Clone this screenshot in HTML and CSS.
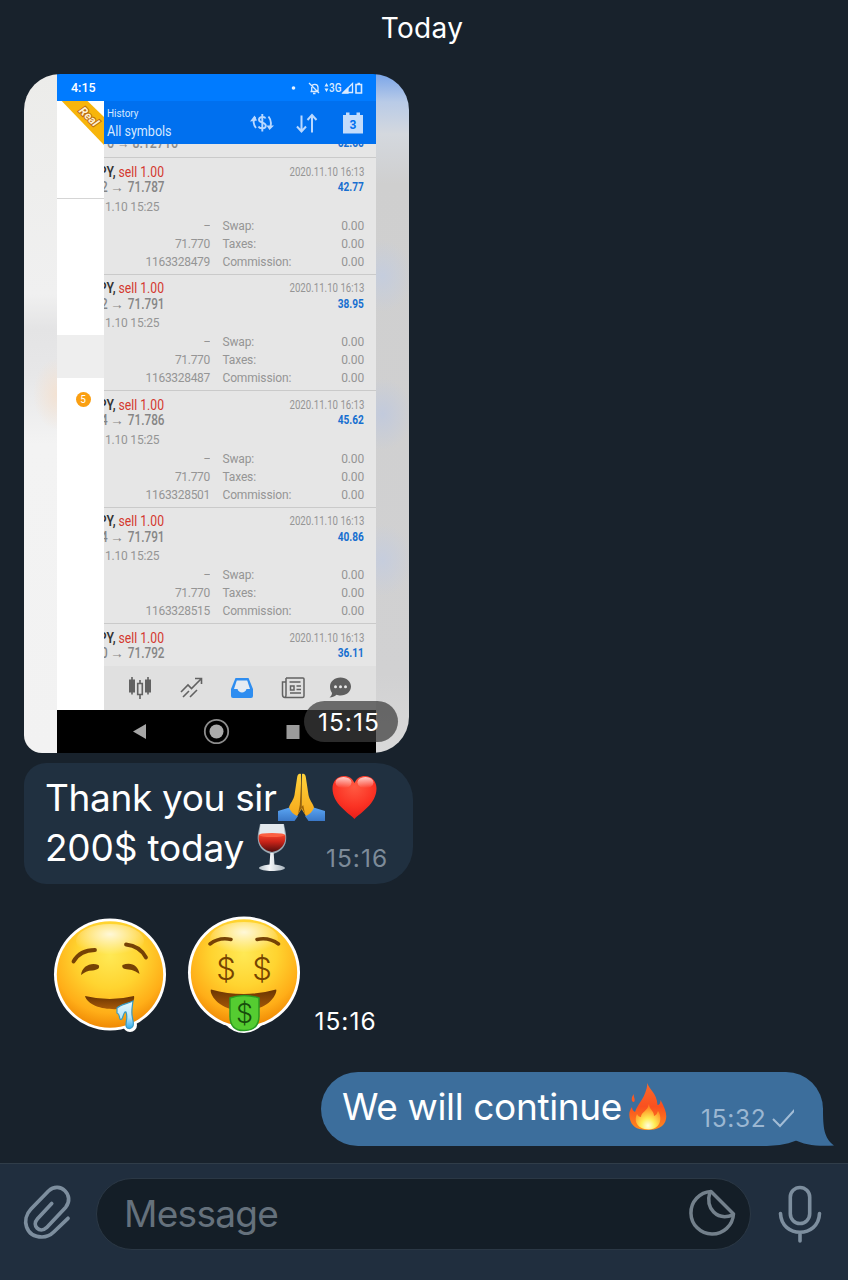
FILE: index.html
```html
<!DOCTYPE html>
<html lang="en">
<head>
<meta charset="utf-8">
<title>Chat</title>
<link rel="stylesheet" href="styles.css">
</head>
<body>
<main class="chat">
  <div class="day"><span>Today</span></div>

  <section class="photo">
    <div class="side side-left"></div>
    <div class="phone">
      <div class="status">
        <span class="clock">4:15</span>
        <svg class="status-icons" width="74" height="16" viewBox="0 0 74 16" fill="none" stroke="#d9eaff" stroke-width="1.3">
          <circle cx="3.5" cy="8" r="1.8" fill="#e8f3ff" stroke="none"/>
          <path d="M20.500 11.500h7.500V7.500c0-4-6-4-6.300-.5v4.300M19 3l10 10M23 13.500h2.500"/>
          <path d="M34.500 6.500l2-3.500 2 3.500zM34.500 8.500l2 3.500 2-3.500z" fill="#d9eaff" stroke="none"/>
          <text x="39" y="12" class="net" textLength="12.500" lengthAdjust="spacingAndGlyphs">3G</text>
          <path d="M53.500 12.500L62.500 3.500v9z"/><path d="M53 13l5-5v5z" fill="#d9eaff"/>
          <path d="M66 4.500h5.500v8.500H66zM67.500 3.500h2.500" stroke-width="1.600"/>
        </svg>
      </div>
      <div class="app">
        <aside class="drawer">
          <div class="drawer-head">
            <svg width="47" height="45" viewBox="0 0 47 45">
              <path d="M4.700 0H30.500L47 16V44z" fill="#f7b50c"/>
              <text class="real" x="32" y="15.500" text-anchor="middle" dominant-baseline="central" transform="rotate(45 32 15.500)">Real</text>
            </svg>
          </div>
          <div class="drawer-gap"></div>
          <div class="drawer-active"></div>
          <div class="drawer-badge">5</div>
        </aside>
        <div class="screen">
          <header class="toolbar">
            <div class="titles"><span class="t-small">History</span><span class="t-big">All symbols</span></div>
            <svg width="116" height="26" viewBox="0 0 116 26" fill="none" stroke="#b9d8ff" stroke-width="2">
              <path d="M17.500 8.500c-1-2.500-6.500-2-6.500 1.200 0 3.500 6.800 2.500 6.800 6 0 3.300-6 3.500-7.300.8M14.300 4v17.500" stroke-width="1.900"/>
              <path d="M7.500 7c-3 3-2 8 .5 11M20.500 6.500c2 2.500 3 6 2 9.500" stroke-width="1.900"/>
              <path d="M2 11.500l4.500-6 2.500 5zM18.500 15.500h7.500l-4.500 4.500z" fill="#b9d8ff" stroke="none"/>
              <path d="M53.500 5.500v16M49 16.500l4.500 5 4.500-5M64 22.500V5M59.500 10l4.500-5 4.500 5"/>
              <path d="M95 5h20v18.500H95zM98 2.500h3.500v4H98zM108.500 2.500h3.500v4h-3.500z" fill="#c3dcfb" stroke="none"/>
              <text x="105" y="19" text-anchor="middle" class="cal">3</text>
            </svg>
          </header>
          <div class="list">
            <div class="partial"><span class="pl">6 → 8.12716</span><span class="pr">62.66</span></div>
            <article class="deal">
              <div class="line"><span class="sym"><b>JPY,</b> sell 1.00</span><span class="date">2020.11.10 16:13</span></div>
              <div class="line"><span class="price">2 <i>→</i> 71.787</span><span class="profit">42.77</span></div>
              <div class="open">1.10 15:25</div>
              <div class="info"><span>—</span><span>Swap:</span><span>0.00</span><span>71.770</span><span>Taxes:</span><span>0.00</span><span>1163328479</span><span>Commission:</span><span>0.00</span></div>
            </article>
            <article class="deal">
              <div class="line"><span class="sym"><b>JPY,</b> sell 1.00</span><span class="date">2020.11.10 16:13</span></div>
              <div class="line"><span class="price">2 <i>→</i> 71.791</span><span class="profit">38.95</span></div>
              <div class="open">1.10 15:25</div>
              <div class="info"><span>—</span><span>Swap:</span><span>0.00</span><span>71.770</span><span>Taxes:</span><span>0.00</span><span>1163328487</span><span>Commission:</span><span>0.00</span></div>
            </article>
            <article class="deal">
              <div class="line"><span class="sym"><b>JPY,</b> sell 1.00</span><span class="date">2020.11.10 16:13</span></div>
              <div class="line"><span class="price">4 <i>→</i> 71.786</span><span class="profit">45.62</span></div>
              <div class="open">1.10 15:25</div>
              <div class="info"><span>—</span><span>Swap:</span><span>0.00</span><span>71.770</span><span>Taxes:</span><span>0.00</span><span>1163328501</span><span>Commission:</span><span>0.00</span></div>
            </article>
            <article class="deal">
              <div class="line"><span class="sym"><b>JPY,</b> sell 1.00</span><span class="date">2020.11.10 16:13</span></div>
              <div class="line"><span class="price">4 <i>→</i> 71.791</span><span class="profit">40.86</span></div>
              <div class="open">1.10 15:25</div>
              <div class="info"><span>—</span><span>Swap:</span><span>0.00</span><span>71.770</span><span>Taxes:</span><span>0.00</span><span>1163328515</span><span>Commission:</span><span>0.00</span></div>
            </article>
            <article class="deal">
              <div class="line"><span class="sym"><b>JPY,</b> sell 1.00</span><span class="date">2020.11.10 16:13</span></div>
              <div class="line"><span class="price">0 <i>→</i> 71.792</span><span class="profit">36.11</span></div>
            </article>
          </div>
          <nav class="tabs">
            <svg width="272" height="44" viewBox="0 0 272 44" fill="none" stroke="#626262" stroke-width="2">
              <path d="M25 13.500h6v13h-6zM41 13.500h6v13h-6z" fill="#626262" stroke="none"/><path d="M28 11v17.500M44 11v17.500M36 14v4M36 28v5M33.700 17.500h4.600v11h-4.600z" stroke-width="1.600"/>
              <path d="M77 26l7-7 3.500 3.500L97 13M91 12.500h6.500V18M79 31l6-6M86 31l7-7" stroke-width="1.600"/>
              <path d="M131.500 12h13l4.500 11v7q0 2-2 2h-18q-2 0-2-2v-7z" fill="#2e8df0" stroke="none"/><path d="M132.800 14.500h10.400L146 23h-3.500c-1 4.500-8 4.500-9 0H130z" fill="#e5ebf2" stroke="none"/>
              <path d="M182 12h17q1 0 1 1v17q0 1.500-1.500 1.500H181q-2.500 0-2.500-3V16h3.500M182 12v17q0 2-1 2.500M185.500 16h11M192.500 20h4.500M192.500 23.500h4.500M186 27h11" stroke-width="1.500"/><path d="M186.500 20h3.500v4h-3.500z" stroke-width="1.500"/>
              <path d="M236.500 11.500c6 0 10.500 4 10.500 9s-4.500 9-10.500 9c-1.500 0-3-.3-4-.7-2 2-4.500 2.700-7 2.700 1.500-1.300 2.500-2.700 2.500-4.500-1.300-1.700-2-4-2-6.500 0-5 4.500-9 10.500-9z" fill="#5f5f5f" stroke="none"/>
              <g fill="#e8e8e8" stroke="none"><circle cx="231.500" cy="20.800" r="1.500"/><circle cx="236.500" cy="20.800" r="1.500"/><circle cx="241.500" cy="20.800" r="1.500"/></g>
            </svg>
          </nav>
        </div>
      </div>
      <div class="android">
        <svg width="319" height="43" viewBox="0 0 319 43">
          <path d="M76 21.500L89 14v15z" fill="#a6a6a6"/>
          <circle cx="159.500" cy="21.500" r="11.700" fill="none" stroke="#8c8c8c" stroke-width="1.800"/><circle cx="159.500" cy="21.500" r="7" fill="#ababab"/>
          <path d="M229.500 15h13v14h-13z" fill="#9b9b9b"/>
        </svg>
      </div>
    </div>
    <div class="side side-right"></div>
    <div class="photo-time"><span>15:15</span></div>
  </section>

  <section class="bubble in">
    <div class="row1"><span class="msg w-thank">Thank you sir</span>
      <svg width="47" height="48" viewBox="0 0 47 48">
        <defs><linearGradient id="hand" x1="0" y1="0" x2="0" y2="1"><stop offset="0" stop-color="#ffd23c"/><stop offset="1" stop-color="#f6a91b"/></linearGradient><linearGradient id="sleeve" x1="0" y1="0" x2="0" y2="1"><stop offset="0" stop-color="#5ba5f3"/><stop offset="1" stop-color="#3a78c8"/></linearGradient></defs>
        <path d="M0 38l11.500-3.500L20 43l-3.500 5H0zM47 38l-11.500-3.500L27 43l3.500 5H47z" fill="url(#sleeve)"/>
        <path d="M23 1c-2-1-3.500.5-3.800 3L16.500 22c-.8 5-4.500 8.500-5.500 12.500 1.500 4 4.500 7 8 8.500l4.500-7z" fill="url(#hand)"/>
        <path d="M24 1c2-1 3.500.5 3.800 3l2.700 18c.8 5 4.500 8.500 5.500 12.500-1.500 4-4.500 7-8 8.500l-4.500-7z" fill="url(#hand)"/>
        <path d="M23.500 1.500v33.500l-3.500 6 1.800-9zM23.500 34l3.500 7-1.800-9" fill="#9a6208"/>
      </svg>
      <svg class="heart" width="45" height="43" viewBox="0 0 45 43">
        <defs><radialGradient id="heart" cx=".5" cy=".25" r=".75"><stop offset="0" stop-color="#ff5a42"/><stop offset=".6" stop-color="#fb3324"/><stop offset="1" stop-color="#e81d18"/></radialGradient><linearGradient id="shine" x1="0" y1="0" x2="0" y2="1"><stop offset="0" stop-color="#fff" stop-opacity=".75"/><stop offset="1" stop-color="#fff" stop-opacity="0"/></linearGradient></defs>
        <path d="M22.500 43C17 37 .5 28 .5 12.500.5 5 5.500 0 12 0c5 0 8.500 2.500 10.500 7C24.500 2.500 28 0 33 0c6.500 0 11.500 5 11.500 12.500C44.500 28 28 37 22.500 43z" fill="url(#heart)"/>
        <ellipse cx="11.500" cy="6.500" rx="8" ry="5.500" fill="url(#shine)"/><ellipse cx="33.500" cy="6.500" rx="8" ry="5.500" fill="url(#shine)"/>
      </svg>
    </div>
    <div class="row2"><span class="msg w-200">200$ today</span>
      <svg width="30" height="47" viewBox="0 0 30 47">
        <defs><linearGradient id="wine" x1="0" y1="0" x2="0" y2="1"><stop offset="0" stop-color="#f2452c"/><stop offset=".4" stop-color="#c92318"/><stop offset="1" stop-color="#500d0d"/></linearGradient><linearGradient id="glass" x1="0" y1="0" x2="1" y2="0"><stop offset="0" stop-color="#b5c0c8"/><stop offset=".4" stop-color="#f6f8fa"/><stop offset="1" stop-color="#a9b5bf"/></linearGradient></defs>
        <path d="M3 0h24c1 6 3 11 2 17-1 7-7 12-14 13C8 29 2 24 1 17 0 11 2 6 3 0z" fill="#9aa8b2"/>
        <path d="M3.500 0h23L28 11H2z" fill="#e3e9ed"/>
        <path d="M1.800 11h26.400c1.500 9-5 16-13.200 17C6.800 27 .3 20 1.800 11z" fill="url(#wine)"/><ellipse cx="15" cy="11" rx="13" ry="2" fill="#fb6042"/>
        <path d="M13.300 29h3.400l.8 11.500c4 .5 10 1.500 10.500 3.500-1 4-25 4-26 0 .5-2 6.500-3 10.500-3.500z" fill="url(#glass)"/>
      </svg>
      <span class="time t-in">15:16</span>
    </div>
  </section>

  <section class="stickers">
    <svg width="114" height="118" viewBox="0 0 114 118">
      <defs>
        <radialGradient id="face" cx=".5" cy=".32" r=".68"><stop offset="0" stop-color="#ffe955"/><stop offset=".45" stop-color="#ffd430"/><stop offset=".8" stop-color="#ffae18"/><stop offset="1" stop-color="#f08a05"/></radialGradient>
        <radialGradient id="glow" cx=".5" cy=".3" r=".6"><stop offset="0" stop-color="#fff" stop-opacity=".8"/><stop offset="1" stop-color="#fff" stop-opacity="0"/></radialGradient>
        <linearGradient id="mouth" x1="0" y1="0" x2="0" y2="1"><stop offset="0" stop-color="#6b3502"/><stop offset="1" stop-color="#a85a08"/></linearGradient>
        <linearGradient id="drool" x1="0" y1="0" x2="0" y2="1"><stop offset="0" stop-color="#e8f9ff"/><stop offset=".6" stop-color="#b8e6fa"/><stop offset="1" stop-color="#2fa9ea"/></linearGradient>
      </defs>
      <circle cx="57" cy="58.500" r="56" fill="#fff"/><circle cx="77" cy="109" r="7" fill="#fff"/>
      <circle cx="57" cy="58.500" r="53.200" fill="url(#face)"/><ellipse cx="57" cy="25" rx="34" ry="17" fill="url(#glow)"/>
      <path d="M20.500 45.500Q27 34 42 34M73 28.500Q87 30 93 41.500" fill="none" stroke="#764205" stroke-width="3.800" stroke-linecap="round"/>
      <path d="M28 59c1-9 10-13 17.500-10 2 3-1 5-6 5.500-5 0-8 2-11.500 4.500zM86.500 58c-1-9-9-12.500-17-9-1 3 1 4 6 4.500 5 .5 7 2 11 4.500z" fill="#764205"/>
      <path d="M32 80q25 6 49 0c1 4-2 12-15 13-15 1-31-3-34-13z" fill="url(#mouth)"/>
      <path d="M64 92c4-4 10-4 16-7-1 7-2 11-.5 17 .500 3 1.500 5 .500 8-2 4-7 3-7-1 0-5 2-8 0-13-3-1-3 10-6 7-1-2 0-5-3-6z" fill="url(#drool)" stroke="#379ac4" stroke-width="1.200"/>
    </svg>
    <svg class="money" width="114" height="118" viewBox="0 0 114 118">
      <circle cx="57" cy="56.500" r="56" fill="#fff"/><path d="M38 108Q46 117 57 117t19-9L72 98H42z" fill="#fff"/>
      <circle cx="57" cy="56.500" r="53.200" fill="url(#face)"/><ellipse cx="57" cy="23" rx="34" ry="17" fill="url(#glow)"/>
      <path d="M23 28q9-7 21-4.500M70 23.500q12-2.500 21.500 4.500" fill="none" stroke="#764205" stroke-width="3.500" stroke-linecap="round"/>
      <g class="eye" text-anchor="middle"><text x="39" y="64">$</text><text x="75" y="64">$</text></g>
      <path d="M24 73.500q33 9 65 0c2 1-4 21-32 21S22 75.500 24 73.500z" fill="url(#mouth)"/>
      <path d="M43 82q14-5 29 0v18q0 14-14.500 14.500T43 100z" fill="#55cc31" stroke="#299b22" stroke-width="1.500"/>
      <text class="tongue" x="57.500" y="107" text-anchor="middle">$</text>
    </svg>
    <span class="time t-st">15:16</span>
  </section>

  <section class="bubble out">
    <span class="msg w-we">We will continue</span>
    <svg class="fire" width="38" height="48" viewBox="0 0 38 48">
      <defs><linearGradient id="fl" x1="0" y1="0" x2="0" y2="1"><stop offset="0" stop-color="#fa6a2b"/><stop offset=".5" stop-color="#f9501f"/><stop offset="1" stop-color="#ff8a1e"/></linearGradient><radialGradient id="fc" cx=".5" cy=".85" r=".7"><stop offset="0" stop-color="#fffde0"/><stop offset=".4" stop-color="#ffed55"/><stop offset="1" stop-color="#ff8b22"/></radialGradient></defs>
      <path d="M18.500 0c1 6 9.500 10 10 22 2 0 3-2 3-5 5 9 7 15 5 21-2 6-9 9-17.500 9S4 45 1.500 38C-.5 32 0 28 3 24c0 2 1 4 3 5 3-9 11-14 12.500-29zM5 11c-1 4 2 5 0 8-3 0-3-5 0-8z" fill="url(#fl)"/>
      <path d="M20 21c0 6 5 6 5 12 3-1 3-3 4-5 4 5 4 18-9 18.500C7 46 5 37 8 31c1 2 2 3 4 3 0-5 7-6 8-13z" fill="url(#fc)"/>
    </svg>
    <span class="time t-out">15:32</span>
    <svg class="check" width="26" height="20" viewBox="0 0 26 20"><path d="M2 11l7 7L24 1.500" fill="none" stroke="#a3bdd6" stroke-width="2"/></svg>
    <svg class="tail" width="40" height="38" viewBox="0 0 40 38"><path d="M29 0c0 20 1 30 11 37.500C23 38.500 10 37 0 31.500V0z" fill="#3c6e9c"/></svg>
  </section>
</main>

<footer class="composer">
  <svg class="clip" width="50" height="56" viewBox="0 0 50 56" fill="none" stroke="#7d8e9e" stroke-width="3.700" stroke-linecap="round" stroke-linejoin="round"><path d="M28.700 18.500L14.500 33.700c-6.300 7 2.200 15.200 9 9L42.800 22.200C52 10.500 37 -4.500 25.500 6L8 24C-2 34.500 2.500 52 19 52c5 0 8.800-2 12-5.200L45 33.300"/></svg>
  <div class="input">
    <span class="placeholder">Message</span>
    <svg width="48" height="48" viewBox="0 0 48 48" fill="none" stroke="#73808b" stroke-width="3.500" stroke-linejoin="round"><path d="M23 2.500A21.300 21.300 0 1 0 45.500 25z"/><path d="M22 2.500C17 20 29 32 45 26"/></svg>
  </div>
  <svg class="mic" width="44" height="58" viewBox="0 0 44 58" fill="none" stroke="#7d8e9e" stroke-width="3.600" stroke-linecap="round"><rect x="12.300" y="2.500" width="19.400" height="36" rx="9.700"/><path d="M2.500 28.500c1 25 38 25 39 0M22 48v8"/></svg>
</footer>
</body>
</html>
```

FILE: styles.css
```css
* { box-sizing: border-box; }
body {
  margin: 0;
  width: 848px;
  height: 1280px;
  display: flex;
  flex-direction: column;
  overflow: hidden;
  background: #18222c;
  color: #fff;
  font-family: Inter, "Liberation Sans", sans-serif;
}
svg { display: block; flex: none; }
span { white-space: nowrap; }
.chat { height: 1163px; display: flex; flex-direction: column; align-items: flex-start; }
.day { width: 844px; height: 74px; padding-top: 10px; text-align: center; font-size: 28px; line-height: 36px; letter-spacing: .3px; }

/* photo message */
.photo {
  position: relative;
  width: 385px;
  height: 679px;
  display: grid;
  grid-template-columns: 33px 319px 33px;
  border-radius: 36px 36px 36px 18px;
  overflow: hidden;
  font-family: Roboto, "Liberation Sans", sans-serif;
}
.side-left { background: radial-gradient(ellipse 24px 36px at 100% 320px, #f3e2d3, transparent), linear-gradient(#ececea 0, #f0f0f0 220px, #e4e4e5 255px, #e7e7e8 300px, #f3f3f3 370px, #f2f2f2 100%); }
.side-right { background: radial-gradient(ellipse 30px 36px at 20% 202px, #c5cddd, transparent), radial-gradient(ellipse 30px 36px at 20% 340px, #c2cadc, transparent), radial-gradient(ellipse 30px 36px at 20% 486px, #c6cddd, transparent), linear-gradient(#7ba6e9 0, #b9cbe7 28px, #d4d8de 60px, #cfcfcf 110px, #d1d1d2 600px, #d9d9d9 100%); }
.phone { display: flex; flex-direction: column; overflow: hidden; }
.status { height: 27px; background: #007bff; display: flex; justify-content: space-between; align-items: center; padding: 0 12px 0 14px; }
.clock { font-size: 12.5px; font-weight: 500; }
.net { font: 500 12px Roboto, sans-serif; fill: #d9eaff; stroke: none; }
.app { height: 609px; display: flex; }
.drawer { width: 47px; background: #fff; }
.drawer-head { height: 98px; border-bottom: 1px solid #d5d5d5; }
.real { font: italic bold 11.5px Roboto, sans-serif; fill: #fff1cf; stroke: #bb6b12; stroke-width: 2px; paint-order: stroke; }
.drawer-gap { height: 136px; }
.drawer-active { height: 43px; background: #eee; }
.drawer-badge { width: 15px; height: 15px; margin: 14px 0 0 18.5px; border-radius: 50%; background: #fa9f12; font-size: 10px; line-height: 15px; text-align: center; }
.screen { width: 272px; display: flex; flex-direction: column; overflow: hidden; }
.toolbar { height: 43px; flex: none; background: #0070ef; display: flex; justify-content: space-between; align-items: center; padding: 0 12px 0 2.5px; color: #d6e8ff; }
.titles { display: flex; flex-direction: column; width: 80px; padding-top: 3px; }
.t-small { font-size: 11.5px; line-height: 15px; transform: scaleX(.86); transform-origin: left; }
.t-big { font-size: 15.5px; line-height: 21px; transform: scaleX(.81); transform-origin: left; }
.cal { font: bold 12px Roboto, sans-serif; fill: #0070ef; stroke: none; }
.list { height: 522px; flex: none; overflow: hidden; background: #e6e6e6; }
.partial { height: 13px; display: flex; justify-content: space-between; padding: 0 12px 0 3px; font-size: 14px; font-weight: 500; line-height: 15px; color: #8c8c8c; }
.partial span { height: 15px; margin-top: -8px; clip-path: inset(8px 0 0 0); }
.pl { transform: scaleX(.88); transform-origin: left; }
.pr { color: #1b70cf; font-size: 12.3px; font-weight: 700; transform: scaleX(.82); transform-origin: right; }
.deal { height: 116.5px; border-top: 1px solid #cacaca; padding: 5.5px 12px 0 0; color: #959595; font-size: 12px; }
.line { height: 15.5px; line-height: 16px; display: flex; justify-content: space-between; }
.sym, .price { width: 60px; display: flex; justify-content: flex-end; white-space: pre; transform-origin: right; font-size: 14px; }
.sym { color: #d4382e; transform: scaleX(.87); }
.sym b { color: #333; font-weight: 600; }
.price { width: 60.5px; font-weight: 500; color: #858585; transform: scaleX(.84); }
.price i { font-style: normal; display: inline-block; transform: scaleX(1.15); margin: 0 2px 0 1px; }
.date { font-size: 12.3px; line-height: 17px; transform: scaleX(.785); transform-origin: right; }
.profit { font-size: 12.3px; line-height: 17px; font-weight: 700; color: #176fd0; transform: scaleX(.82); transform-origin: right; }
.open { height: 22px; line-height: 25px; padding-left: 1px; letter-spacing: -.2px; }
.info { display: grid; grid-template-columns: 106px 1fr auto; column-gap: 12.5px; grid-auto-rows: 18px; line-height: 18px; letter-spacing: -.15px; }
.info span:nth-child(3n+1) { text-align: right; letter-spacing: -.3px; }
.info span:first-child { transform: scaleX(.7); transform-origin: right; }
.tabs { height: 44px; flex: none; background: #e0e0e0; }
.android { height: 43px; background: #000; }
.photo-time {
  position: absolute;
  right: 11px;
  bottom: 11px;
  width: 94px;
  height: 41px;
  border-radius: 20.5px;
  background: rgba(60, 60, 60, .72);
  padding-left: 14px;
  font: 24.5px/42px Inter, sans-serif;
  letter-spacing: 1px;
}

/* text bubbles */
.photo, .in { margin-left: 24px; }
.bubble { display: flex; }
.msg { font-size: 37px; line-height: 50px; transform-origin: left; }
.time { font-size: 24.5px; line-height: 32px; letter-spacing: 1px; }
.in { flex-direction: column; width: 389px; height: 121px; margin-top: 10px; padding: 10px 22px 10px 21px; border-radius: 22px 37px 37px 22px; background: #203040; }
.row1, .row2 { display: flex; height: 50px; }
.w-thank { width: 233px; letter-spacing: -.35px; }
.heart { margin: 3px 0 0 6.5px; }
.w-200 { width: 212px; letter-spacing: -.2px; }
.row2 svg { margin-top: 1px; }
.t-in { margin: 19px 0 0 39px; color: #7d8b99; }
.stickers { display: flex; height: 118px; margin: 32px 0 0 53px; }
.money { margin-left: 20px; }
.t-st { margin: 89px 0 0 13.5px; }
.eye text { font: 300 31px Inter, sans-serif; fill: #754300; }
.tongue { font: 300 27px Inter, sans-serif; fill: #174d0c; }
.out { position: relative; width: 502px; height: 74px; margin: 38px 0 0 321px; padding: 10px 22px 10px 21px; border-radius: 37px 37px 56px 37px / 37px; background: #3c6e9c; }
.w-we { width: 287px; letter-spacing: -.35px; }
.fire { margin-top: 1px; }
.t-out { width: 66px; margin: 20px 0 0 34px; color: #9bb7d2; letter-spacing: .7px; }
.check { margin: 26px 0 0 4px; }
.tail { position: absolute; right: -11px; bottom: 0; }

/* composer */
.composer { height: 117px; display: flex; align-items: flex-start; padding: 14px 0 0 23px; background: #202e3e; border-top: 1px solid #303d49; }
.clip { margin-top: 7px; }
.input { width: 655px; height: 72px; margin-left: 23px; padding: 0 14px 2px 27px; border: 1px solid #2b3845; border-radius: 36px; background: #141e27; display: flex; justify-content: space-between; align-items: center; }
.placeholder { font-size: 37px; letter-spacing: -.7px; color: #65717c; }
.mic { margin: 7px 0 0 27px; }
```
